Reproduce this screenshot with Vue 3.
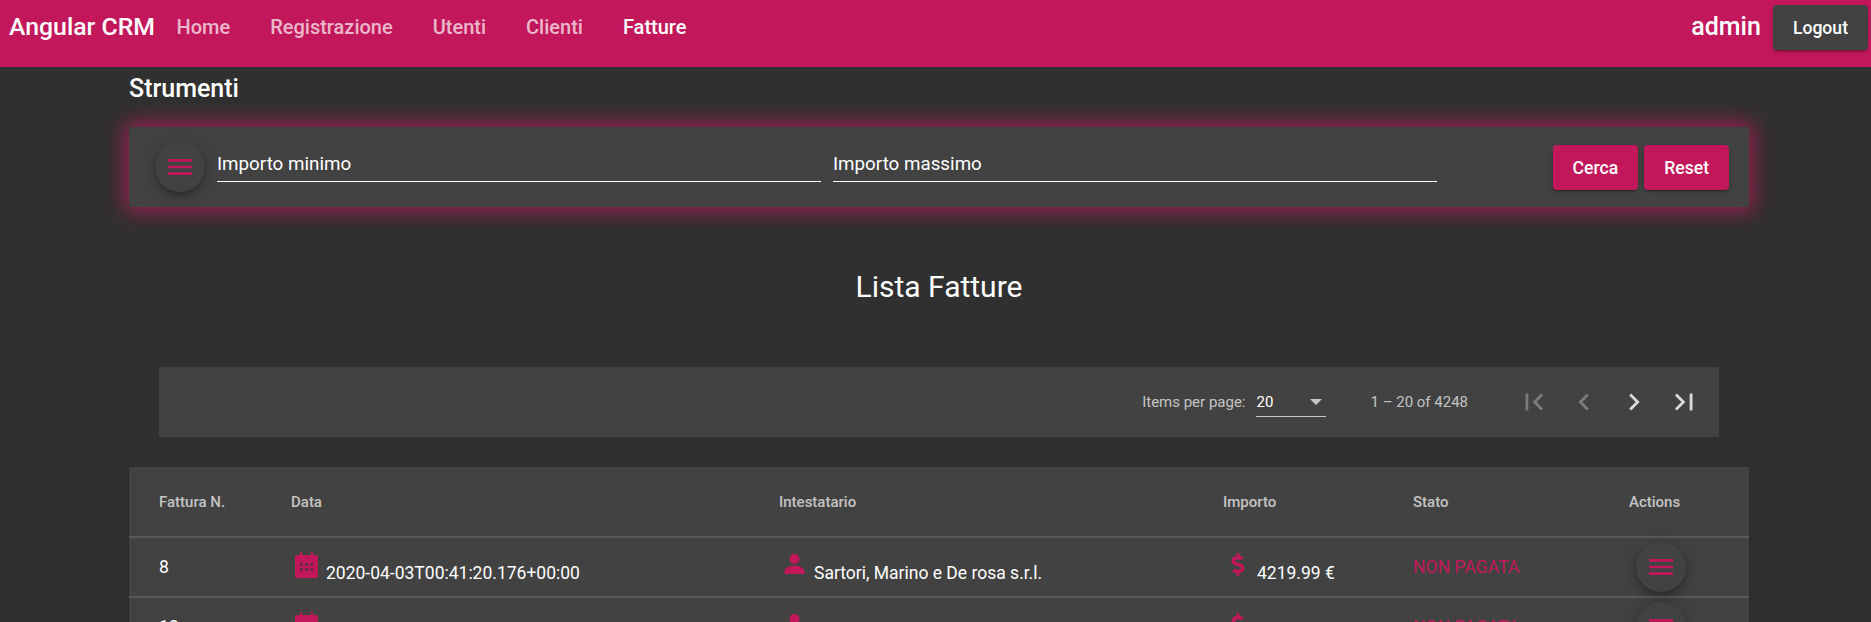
<template>
  <div class="page">
    <header class="toolbar">
      <span class="brand">Angular CRM</span>
      <nav class="nav">
        <a v-for="link in links" :key="link" class="nav-link" :class="{ active: link === 'Fatture' }">{{ link }}</a>
      </nav>
      <span class="spacer"></span>
      <span class="user">admin</span>
      <button class="btn btn-dark">Logout</button>
    </header>

    <main class="content">
      <h2 class="tools-title">Strumenti</h2>
      <section class="tools">
        <button class="fab">
          <svg viewBox="0 0 24 24" class="menu-icon"><path d="M3 18h18v-2H3v2zm0-5h18v-2H3v2zm0-7v2h18V6H3z" /></svg>
        </button>
        <label class="field">Importo minimo</label>
        <label class="field">Importo massimo</label>
        <span class="spacer"></span>
        <button class="btn btn-pink">Cerca</button>
        <button class="btn btn-pink">Reset</button>
      </section>

      <h1 class="list-title">Lista Fatture</h1>

      <div class="paginator">
        <span class="per-page">Items per page:</span>
        <div class="select">
          <span>20</span>
          <i class="select-arrow"></i>
        </div>
        <span class="range">1 – 20 of 4248</span>
        <div class="pager">
          <svg viewBox="0 0 24 24" class="page-icon off"><path d="M18.41 16.59L13.82 12l4.59-4.59L17 6l-6 6 6 6zM6 6h2v12H6z" /></svg>
          <svg viewBox="0 0 24 24" class="page-icon off"><path d="M15.41 7.41L14 6l-6 6 6 6 1.41-1.41L10.83 12z" /></svg>
          <svg viewBox="0 0 24 24" class="page-icon"><path d="M10 6L8.59 7.41 13.17 12l-4.58 4.59L10 18l6-6z" /></svg>
          <svg viewBox="0 0 24 24" class="page-icon"><path d="M5.59 7.41L10.18 12l-4.59 4.59L7 18l6-6-6-6zM16 6h2v12h-2z" /></svg>
        </div>
      </div>

      <section class="table">
        <div class="row head">
          <span>Fattura N.</span>
          <span>Data</span>
          <span>Intestatario</span>
          <span>Importo</span>
          <span>Stato</span>
          <span>Actions</span>
        </div>
        <div v-for="row in rows" :key="row.id" class="row">
          <span class="num">{{ row.id }}</span>
          <span class="cell cell-date">
            <svg viewBox="0 0 23 26" class="ico ico-cal">
              <path d="M5 0h2v3h9V0h2v3h3a2 2 0 0 1 2 2v19a2 2 0 0 1-2 2H2a2 2 0 0 1-2-2V5a2 2 0 0 1 2-2h3z" />
              <path class="cal-cells" d="M5 11h3v3H5zM10 11h3v3h-3zM15 11h3v3h-3zM5 16h3v3H5zM10 16h3v3h-3zM15 16h3v3h-3z" />
            </svg>
            <span class="cell-text">{{ row.date }}</span>
          </span>
          <span class="cell cell-owner">
            <svg viewBox="0 0 24 24" class="ico ico-user"><circle cx="12" cy="6" r="6" /><path d="M0 24v-3c0-4.500 6-7 12-7s12 2.500 12 7v3z" /></svg>
            <span class="cell-text">{{ row.owner }}</span>
          </span>
          <span class="cell cell-amount">
            <svg viewBox="0 0 288 512" class="ico ico-dollar"><path d="M209.200 233.400l-108-31.600C88.700 198.200 80 186.500 80 173.500c0-16.300 13.200-29.500 29.500-29.500h66.300c12.200 0 24.200 3.700 34.200 10.500 6.100 4.100 14.300 3.100 19.500-2l34.800-34c7.100-6.900 6.100-18.400-1.800-24.500C238 74.800 207.400 64.100 176 64V16c0-8.800-7.200-16-16-16h-32c-8.800 0-16 7.200-16 16v48h-2.500C45.800 64-5.400 118.700.5 183.600c4.200 46.100 39.400 83.600 83.800 96.600l102.500 30c12.500 3.700 21.200 15.300 21.200 28.300 0 16.300-13.200 29.500-29.500 29.500h-66.300C100 368 88 364.300 78 357.500c-6.100-4.100-14.300-3.100-19.500 2l-34.800 34c-7.100 6.900-6.100 18.400 1.800 24.500 24.500 19.200 55.100 29.900 86.500 30v48c0 8.800 7.200 16 16 16h32c8.800 0 16-7.200 16-16v-48.200c46.600-.9 90.300-28.600 105.700-72.700 21.500-61.600-14.600-124.800-72.500-141.700z" /></svg>
            <span class="cell-text">{{ row.amount }}</span>
          </span>
          <span class="status">{{ row.status }}</span>
          <span class="actions">
            <button class="fab">
              <svg viewBox="0 0 24 24" class="menu-icon"><path d="M3 18h18v-2H3v2zm0-5h18v-2H3v2zm0-7v2h18V6H3z" /></svg>
            </button>
          </span>
        </div>
      </section>
    </main>
  </div>
</template>

<script setup>
const links = ['Home', 'Registrazione', 'Utenti', 'Clienti', 'Fatture']

const rows = [
  { id: 8, date: '2020-04-03T00:41:20.176+00:00', owner: 'Sartori, Marino e De rosa s.r.l.', amount: '4219.99 €', status: 'NON PAGATA' },
  { id: 12, date: '2020-04-03T00:41:20.176+00:00', owner: 'Sartori, Marino e De rosa s.r.l.', amount: '4219.99 €', status: 'NON PAGATA' }
]
</script>

<style>
html,
body {
  margin: 0;
  height: 100%;
  overflow: hidden;
  background: #303030;
}
</style>

<style scoped>
.page {
  font-family: Roboto, "Liberation Sans", sans-serif;
  color: #fff;
  height: 622px;
  overflow: hidden;
  background: #303030;
}

.toolbar {
  display: flex;
  align-items: flex-start;
  height: 67px;
  box-sizing: border-box;
  padding: 5px 3px 0 9px;
  background: #c2185b;
}

.brand {
  font-size: 24.8px;
  font-weight: 500;
  line-height: 44px;
  margin-right: 21.5px;
}

.nav {
  display: flex;
  gap: 40px;
}

.nav-link {
  font-size: 20px;
  font-weight: 500;
  line-height: 44px;
  color: rgba(255, 255, 255, 0.7);
}

.nav-link.active {
  color: #fff;
}

.spacer {
  flex: 1;
}

.user {
  font-size: 25px;
  font-weight: 500;
  line-height: 44px;
  margin-right: 12px;
}

.btn {
  height: 45px;
  padding: 0 20px;
  border: none;
  border-radius: 4px;
  font-family: inherit;
  font-size: 17.6px;
  font-weight: 500;
  color: #fff;
  box-shadow: 0 3px 1px -2px rgba(0, 0, 0, 0.2), 0 2px 2px 0 rgba(0, 0, 0, 0.14), 0 1px 5px 0 rgba(0, 0, 0, 0.12);
}

.btn-dark {
  background: #424242;
}

.btn-pink {
  background: #c2185b;
}

.content {
  width: 1620px;
  margin-left: 129px;
}

.tools-title {
  margin: 0;
  padding-top: 4px;
  font-size: 25px;
  font-weight: 500;
  line-height: 36px;
  height: 52px;
  box-sizing: border-box;
}

.tools {
  display: flex;
  align-items: flex-start;
  height: 80px;
  margin-top: 8px;
  box-sizing: border-box;
  padding: 15px 20px 0 26px;
  background: #424242;
  box-shadow: 0 0 20px 4px rgba(194, 24, 91, 0.75);
}

.fab {
  display: flex;
  align-items: center;
  justify-content: center;
  flex: none;
  width: 50px;
  height: 50px;
  padding: 0;
  border: none;
  border-radius: 50%;
  background: #424242;
  box-shadow: 0 3px 5px -1px rgba(0, 0, 0, 0.2), 0 6px 10px 0 rgba(0, 0, 0, 0.14), 0 1px 18px 0 rgba(0, 0, 0, 0.12);
}

.menu-icon {
  width: 32px;
  height: 32px;
  fill: #c2185b;
}

.field {
  width: 604px;
  height: 40px;
  box-sizing: border-box;
  font-size: 18.8px;
  line-height: 22px;
  padding-top: 11px;
  margin-left: 12px;
  border-bottom: 1px solid #fff;
}

.tools .btn-pink {
  margin-top: 3px;
  margin-left: 6px;
}

.list-title {
  margin: 57px 0 0;
  height: 46px;
  text-align: center;
  font-size: 30px;
  font-weight: 400;
  line-height: 46px;
}

.paginator {
  display: flex;
  align-items: center;
  height: 70px;
  margin: 57px 30px 0;
  box-sizing: border-box;
  padding: 0 18px 0 0;
  justify-content: flex-end;
  background: #424242;
  font-size: 15px;
  color: rgba(255, 255, 255, 0.7);
}

.select {
  display: flex;
  align-items: center;
  justify-content: space-between;
  width: 70px;
  height: 29px;
  margin: 0 44px 0 11px;
  box-sizing: border-box;
  border-bottom: 1px solid rgba(255, 255, 255, 0.7);
  color: #fff;
}

.select-arrow {
  width: 0;
  height: 0;
  margin-right: 4px;
  border-left: 6px solid transparent;
  border-right: 6px solid transparent;
  border-top: 6px solid rgba(255, 255, 255, 0.7);
}

.range {
  margin-right: 49px;
}

.pager {
  display: flex;
  gap: 16px;
}

.page-icon {
  width: 34px;
  height: 34px;
  fill: rgba(255, 255, 255, 0.8);
}

.page-icon.off {
  fill: rgba(255, 255, 255, 0.3);
}

.table {
  margin-top: 30px;
  background: #424242;
  box-shadow: 0 2px 1px -1px rgba(0, 0, 0, 0.2), 0 1px 1px 0 rgba(0, 0, 0, 0.14), 0 1px 3px 0 rgba(0, 0, 0, 0.12);
}

.row {
  display: grid;
  grid-template-columns: 132px 488px 444px 190px 216px 120px;
  align-items: center;
  height: 60px;
  box-sizing: border-box;
  padding-left: 30px;
  border-bottom: 2px solid rgba(255, 255, 255, 0.12);
}

.head {
  height: 71px;
  font-size: 15px;
  font-weight: 500;
  color: rgba(255, 255, 255, 0.7);
}

.num {
  font-size: 17.6px;
  padding-bottom: 1px;
}

.cell {
  display: flex;
  align-items: flex-start;
}

.cell-text {
  font-size: 17.5px;
  line-height: 20px;
  margin-top: 11px;
}

.ico {
  flex: none;
  fill: #c2185b;
}

.ico-cal {
  width: 23px;
  height: 26px;
  margin: 0 8px 0 4px;
}

.cal-cells {
  fill: #6a2a45;
}

.ico-user {
  width: 21px;
  height: 20px;
  margin: 2px 9px 0 5px;
}

.ico-dollar {
  width: 14px;
  height: 23px;
  margin: 1px 12px 0 8px;
}

.status {
  font-size: 17.6px;
  color: #c2185b;
}

.actions {
  display: flex;
  padding-left: 7px;
}
</style>
